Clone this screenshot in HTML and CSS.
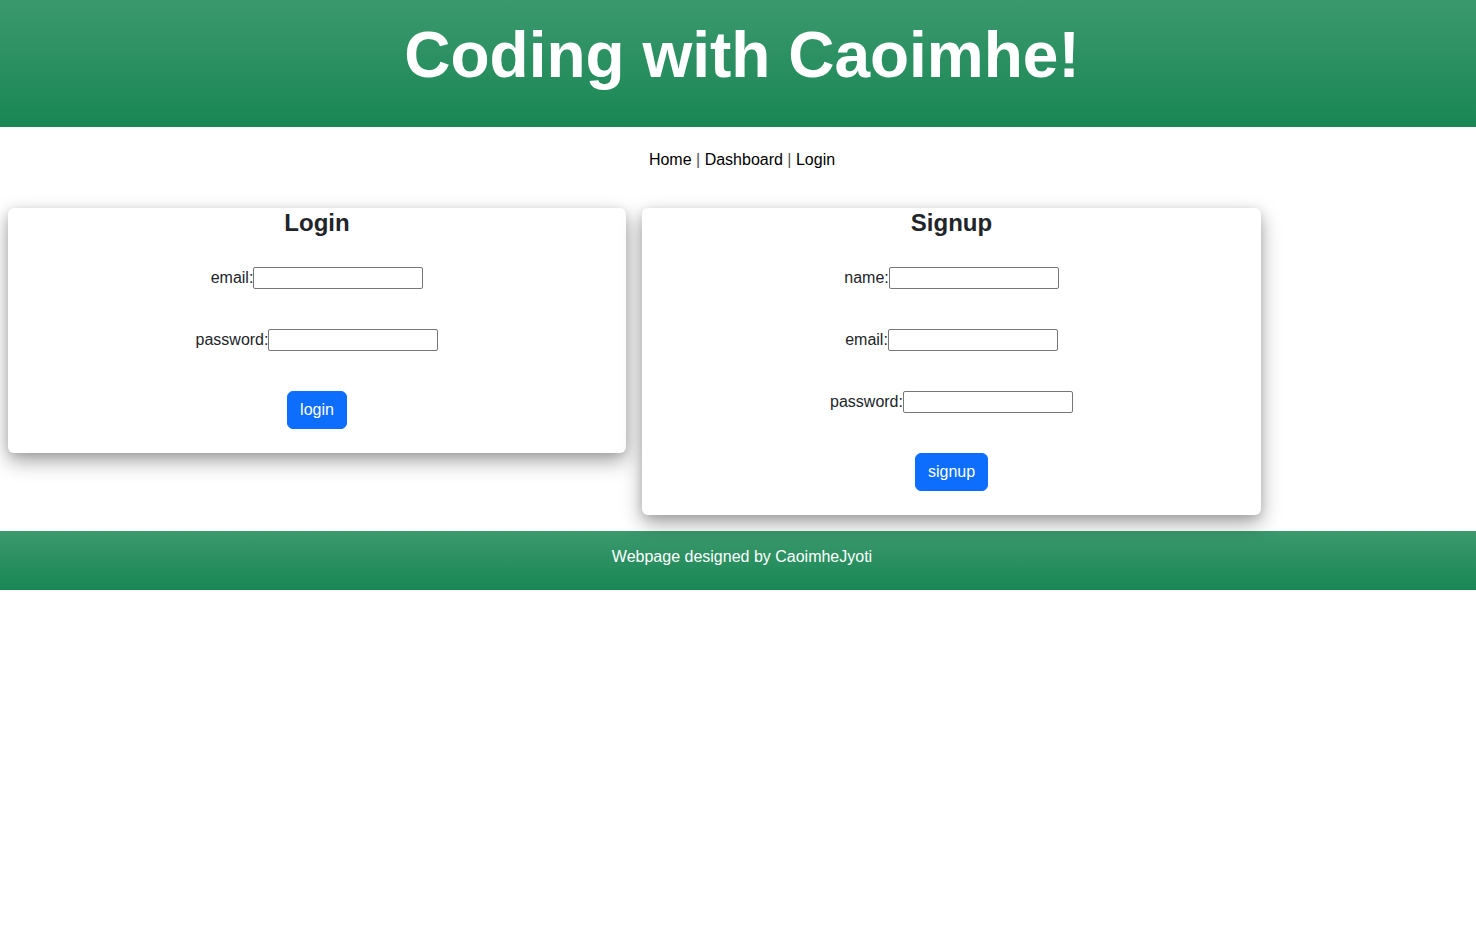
FILE: index.html
```html
<!DOCTYPE html>
<html lang="en">
<head>
<meta charset="utf-8">
<title>Coding with Caoimhe!</title>
<link rel="stylesheet" href="styles.css">
</head>
<body>
<header class="site-header">
  <h1 class="site-title">Coding with Caoimhe!</h1>
</header>
<nav class="site-nav">
  <a href="#" class="nav-link">Home</a> <span class="sep">|</span> <a href="#" class="nav-link">Dashboard</a> <span class="sep">|</span> <a href="#" class="nav-link">Login</a>
</nav>
<main class="cards">
  <section class="card">
    <h4 class="card-title">Login</h4>
    <form class="form">
      <div class="row"><label>email:</label><input type="text" class="field"></div>
      <div class="row"><label>password:</label><input type="password" class="field"></div>
      <div class="actions"><button type="button" class="btn">login</button></div>
    </form>
  </section>
  <section class="card">
    <h4 class="card-title">Signup</h4>
    <form class="form">
      <div class="row"><label>name:</label><input type="text" class="field"></div>
      <div class="row"><label>email:</label><input type="text" class="field"></div>
      <div class="row"><label>password:</label><input type="password" class="field"></div>
      <div class="actions"><button type="button" class="btn">signup</button></div>
    </form>
  </section>
</main>
<footer class="site-footer">
  <p class="footer-text">Webpage designed by CaoimheJyoti</p>
</footer>
</body>
</html>
```

FILE: styles.css
```css
* { box-sizing: border-box; }
html, body { margin: 0; padding: 0; }
body {
  font-family: "Liberation Sans", Arial, Helvetica, sans-serif;
  font-size: 16px;
  line-height: 24px;
  color: #212529;
  background: #fff;
}
.site-header {
  background-color: #198754;
  background-image: linear-gradient(180deg, rgba(255,255,255,.15), rgba(255,255,255,0));
  padding: 17px 0 33px 8px;
  height: 127px;
}
.site-title {
  margin: 0;
  text-align: center;
  color: #fff;
  font-size: 64px;
  font-weight: 700;
  line-height: 76.8px;
}
.site-nav {
  text-align: center;
  padding: 21px 0 36px 8px;
  line-height: 24px;
}
.nav-link { color: #000; text-decoration: none; }
.sep { color: #555; }
.cards {
  display: flex;
  align-items: flex-start;
  gap: 16px;
  padding: 0 8px;
}
.card {
  width: 618px;
  background: #fff;
  border-radius: 6px;
  box-shadow: 0 8px 20px rgba(0,0,0,.36), 0 2px 8px rgba(0,0,0,.1);
  text-align: center;
  padding-bottom: 24px;
}
.card + .card { width: 619px; }
.card-title {
  margin: 0;
  font-size: 24px;
  font-weight: 700;
  line-height: 29px;
  color: #212529;
}
.form {
  padding-top: 29px;
  display: flex;
  flex-direction: column;
  align-items: center;
}
.row {
  display: flex;
  align-items: center;
  justify-content: center;
  height: 24px;
  margin-bottom: 38px;
}
.field {
  width: 170px;
  height: 22px;
  border: 1px solid #767676;
  border-radius: 2px;
  padding: 1px 2px;
  font: inherit;
  font-size: 13px;
  background: #fff;
}
.actions { display: flex; justify-content: center; margin-top: 1px; }
.btn {
  font-family: inherit;
  font-size: 16px;
  line-height: 24px;
  color: #fff;
  background: #0d6efd;
  border: 1px solid #0d6efd;
  border-radius: 6px;
  padding: 6px 12px;
  cursor: pointer;
}
.site-footer {
  margin-top: 16px;
  background-color: #198754;
  background-image: linear-gradient(180deg, rgba(255,255,255,.15), rgba(255,255,255,0));
  padding: 14px 0 21px 8px;
  height: 59px;
}
.footer-text {
  margin: 0;
  text-align: center;
  color: #fff;
  line-height: 24px;
}
```
